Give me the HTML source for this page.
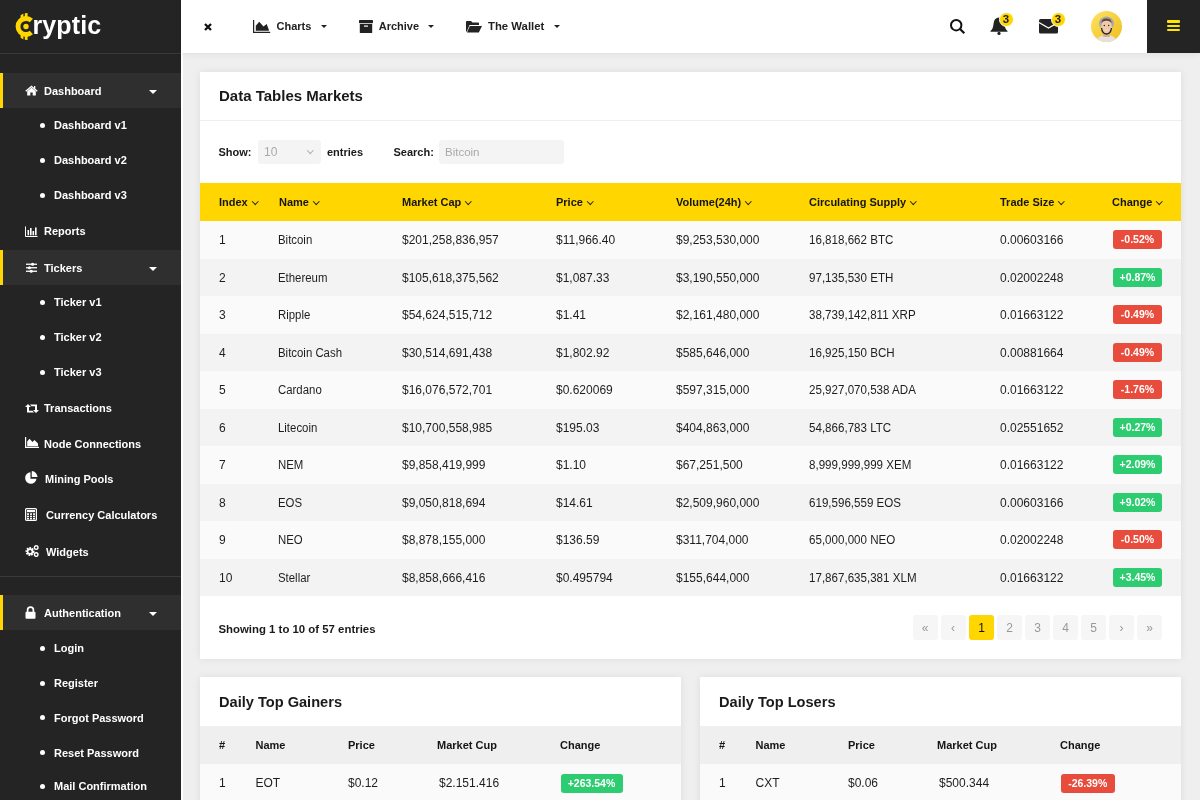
<!DOCTYPE html>
<html><head><meta charset="utf-8"><style>
*{box-sizing:border-box;margin:0;padding:0}
html,body{width:1200px;height:800px;overflow:hidden}
body{will-change:transform}
body{font-family:"Liberation Sans",sans-serif;background:#efefef;position:relative;color:#222}
.abs{position:absolute}
svg{display:block}
#side{position:absolute;left:0;top:0;width:181px;height:800px;background:#242424}
.mi{position:absolute;left:0;width:181px;height:35px;color:#fff;font-weight:bold;font-size:11px;white-space:nowrap}
.mi.act{background:#2f2f2f}
.mi.act::before{content:"";position:absolute;left:0;top:0;width:3px;height:35px;background:#ffd600}
.mi .t{position:absolute;left:44px;top:0;line-height:35px}
.mi .ic{position:absolute;left:25px}
.mi .car{position:absolute;left:149px;top:16.5px;width:0;height:0;border-left:4px solid transparent;border-right:4px solid transparent;border-top:4px solid #fff}
.si{position:absolute;left:0;width:181px;height:20px;color:#fff;font-weight:bold;font-size:11px;white-space:nowrap}
.si .t{position:absolute;left:54px;top:0;line-height:20px}
.si .b{position:absolute;left:40px;top:7.5px;width:5px;height:5px;border-radius:50%;background:#fff}
#top{position:absolute;left:181px;top:0;width:1019px;height:53px;background:#fff;box-shadow:0 1px 7px rgba(0,0,0,.08)}
.tn{position:absolute;top:0;height:53px;line-height:53px;font-weight:bold;font-size:11px;color:#222;white-space:nowrap}
.caret{position:absolute;width:0;height:0;border-left:3.5px solid transparent;border-right:3.5px solid transparent;border-top:3.5px solid #222}
.card{position:absolute;background:#fff;box-shadow:0 0 8px rgba(0,0,0,.08)}
.ttl{position:absolute;font-weight:bold;font-size:15px;color:#1a1a1a;white-space:nowrap}
.lbl{font-weight:bold;font-size:11px;color:#1a1a1a;white-space:nowrap}
.row{position:absolute;left:0;width:981px;height:37.5px}
.cell{position:absolute;top:1px;line-height:37.5px;font-size:12px;color:#1e1e1e;white-space:nowrap}
.hcell{position:absolute;top:0;line-height:38px;font-size:11px;font-weight:bold;color:#151515;white-space:nowrap}
.chev{display:inline-block;width:4.5px;height:4.5px;border-right:1.3px solid #222;border-bottom:1.3px solid #222;transform:rotate(45deg);margin-left:5px;position:relative;top:-2.5px}
.bdg{position:absolute;height:19px;line-height:19px;border-radius:3px;color:#fff;font-size:10.5px;font-weight:bold;text-align:center}
.red{background:#e74c3c}.grn{background:#2ecc71}
.pg{position:absolute;width:25px;height:25px;line-height:25px;text-align:center;background:#f6f6f6;border-radius:3px;color:#999;font-size:12px;padding-top:1px}
.pg.on{background:#ffd600;color:#111}

</style></head><body>
<div id="side">
<div class="logo abs" style="left:14px;top:12px"><svg width="21" height="29" viewBox="0 0 21 29"><g fill="#ffd700"><path d="M17.35 8.55 A8.0 8.0 0 1 0 17.35 20.45" stroke="#ffd700" stroke-width="4.8" fill="none"/><circle cx="12" cy="14.5" r="2.7"/><path d="M6.6 3.2 L9.4 1.6 L9.4 5.6 L6.6 6.6 Z"/><path d="M10.8 1.2 L13.6 0.9 L13.6 5.6 L10.8 5.5 Z"/><path d="M6.6 22.4 L9.4 23.4 L9.4 27.4 L6.6 25.8 Z"/><path d="M10.8 23.5 L13.6 23.4 L13.6 28.1 L10.8 27.8 Z"/></g></svg></div>
<div class="abs" style="left:32.5px;top:9.5px;font-size:25px;font-weight:bold;color:#fff;line-height:30px;letter-spacing:0.1px">ryptic</div>
<div class="abs" style="left:181px;top:53px;width:2px;height:747px;background:#fff"></div>
<div class="abs" style="left:0;top:53px;width:181px;height:1px;background:#3a3a3a"></div>
<div class="mi act" style="top:73.0px"><div class="ic" style="left:25px;top:12px"><svg width="13" height="11" viewBox="0 0 13 11"><path d="M6.5 0.6 L0.3 5.8 L1.1 6.7 L6.5 2.2 L11.9 6.7 L12.7 5.8 L10.3 3.8 L10.3 1 L9 1 L9 2.7 Z M2.2 6.2 L2.2 10.6 L5.3 10.6 L5.3 7.6 L7.7 7.6 L7.7 10.6 L10.8 10.6 L10.8 6.2 L6.5 2.7 Z" fill="#fff"/></svg></div><div class="t" style="left:44px;top:0.5px">Dashboard</div><div class="car"></div></div>
<div class="si" style="top:115px"><div class="b"></div><div class="t">Dashboard v1</div></div>
<div class="si" style="top:150px"><div class="b"></div><div class="t">Dashboard v2</div></div>
<div class="si" style="top:185px"><div class="b"></div><div class="t">Dashboard v3</div></div>
<div class="mi" style="top:213.5px"><div class="ic" style="left:25px;top:12px"><svg width="13" height="11" viewBox="0 0 13 11"><path d="M0.5 0.5 V10.5 H12.5" stroke="#fff" stroke-width="1" fill="none"/><rect x="2.5" y="4" width="1.6" height="5.3" fill="#fff"/><rect x="5" y="2" width="1.6" height="7.3" fill="#fff"/><rect x="7.5" y="5" width="1.6" height="4.3" fill="#fff"/><rect x="10" y="1.5" width="1.6" height="7.8" fill="#fff"/></svg></div><div class="t" style="left:44px;top:0.5px">Reports</div></div>
<div class="mi act" style="top:250.0px"><div class="ic" style="left:25.5px;top:12px"><svg width="11.5" height="11" viewBox="0 0 11.5 11"><g fill="#fff"><rect x="0" y="1.6" width="11.5" height="1.3"/><rect x="0" y="5.1" width="11.5" height="1.3"/><rect x="0" y="8.6" width="11.5" height="1.3"/><ellipse cx="6.6" cy="2.25" rx="1.6" ry="1.6"/><ellipse cx="3.4" cy="5.75" rx="1.6" ry="1.6"/><ellipse cx="5.2" cy="9.25" rx="1.6" ry="1.6"/></g></svg></div><div class="t" style="left:44px;top:1px">Tickers</div><div class="car"></div></div>
<div class="si" style="top:292px"><div class="b"></div><div class="t">Ticker v1</div></div>
<div class="si" style="top:327px"><div class="b"></div><div class="t">Ticker v2</div></div>
<div class="si" style="top:362px"><div class="b"></div><div class="t">Ticker v3</div></div>
<div class="mi" style="top:390.5px"><div class="ic" style="left:25px;top:12px"><svg width="14" height="11" viewBox="0 0 14 11"><path d="M3 1 L0 4 H2 V9.5 H9 L7.5 7.8 H4 V4 H6 Z" fill="#fff"/><path d="M11 10 L14 7 H12 V1.5 H5 L6.5 3.2 H10 V7 H8 Z" fill="#fff"/></svg></div><div class="t" style="left:44px;top:0.5px">Transactions</div></div>
<div class="mi" style="top:426.0px"><div class="ic" style="left:25px;top:11px"><svg width="14" height="11" viewBox="0 0 14 11"><path d="M0.6 0 V10.4 H14" stroke="#fff" stroke-width="1.2" fill="none"/><path d="M2.2 9.2 V4.5 L4.5 1.8 L7.5 5 L9.5 3 L13 6.5 V9.2 Z" fill="#fff"/></svg></div><div class="t" style="left:44px;top:0.5px">Node Connections</div></div>
<div class="mi" style="top:461.0px"><div class="ic" style="left:24px;top:10px"><svg width="14" height="14" viewBox="0 0 13 13"><path d="M6 1.2 A5.3 5.3 0 1 0 11.6 7.2 H6 Z" fill="#fff"/><path d="M7.2 0 A5.8 5.8 0 0 1 12.6 5.6 H7.2 Z" fill="#fff"/></svg></div><div class="t" style="left:45px;top:0.5px">Mining Pools</div></div>
<div class="mi" style="top:497.5px"><div class="ic" style="left:25px;top:10.5px"><svg width="12" height="13" viewBox="0 0 12 13"><rect x="0.6" y="0.6" width="10.8" height="11.8" rx="1" fill="none" stroke="#fff" stroke-width="1.2"/><rect x="2" y="2" width="8" height="2.2" fill="#fff"/><g fill="#fff"><rect x="2" y="5.3" width="2" height="1.6"/><rect x="5" y="5.3" width="2" height="1.6"/><rect x="8" y="5.3" width="2" height="1.6"/><rect x="2" y="7.7" width="2" height="1.6"/><rect x="5" y="7.7" width="2" height="1.6"/><rect x="8" y="7.7" width="2" height="1.6"/><rect x="2" y="10" width="2" height="1.4"/><rect x="5" y="10" width="2" height="1.4"/><rect x="8" y="10" width="2" height="1.4"/></g></svg></div><div class="t" style="left:46px;top:0.5px">Currency Calculators</div></div>
<div class="mi" style="top:534.5px"><div class="ic" style="left:25px;top:10.5px"><svg width="14" height="12" viewBox="0 0 14 12"><circle cx="5" cy="6.5" r="3.4" fill="none" stroke="#fff" stroke-width="2.2" stroke-dasharray="1.6 0.9"/><circle cx="5" cy="6.5" r="2.4" fill="none" stroke="#fff" stroke-width="1.6"/><circle cx="11.2" cy="2.6" r="1.8" fill="none" stroke="#fff" stroke-width="1.4"/><circle cx="11.2" cy="9.6" r="1.8" fill="none" stroke="#fff" stroke-width="1.4"/></svg></div><div class="t" style="left:46px;top:0.5px">Widgets</div></div>
<div class="abs" style="left:0;top:576px;width:181px;height:1px;background:#3a3a3a"></div>
<div class="mi act" style="top:595.0px"><div class="ic" style="left:25px;top:10.5px"><svg width="11" height="13" viewBox="0 0 11 13"><path d="M2.6 6 V4 A2.9 2.9 0 0 1 8.4 4 V6" stroke="#fff" stroke-width="1.7" fill="none"/><rect x="0.5" y="5.8" width="10" height="7" rx="1" fill="#fff"/></svg></div><div class="t" style="left:44px;top:0.5px">Authentication</div><div class="car"></div></div>
<div class="si" style="top:638px"><div class="b"></div><div class="t">Login</div></div>
<div class="si" style="top:673px"><div class="b"></div><div class="t">Register</div></div>
<div class="si" style="top:707.5px"><div class="b"></div><div class="t">Forgot Password</div></div>
<div class="si" style="top:742.5px"><div class="b"></div><div class="t">Reset Password</div></div>
<div class="si" style="top:776px"><div class="b"></div><div class="t">Mail Confirmation</div></div>
</div>
<div id="top">
</div>
<div class="abs" style="left:203.5px;top:22.8px"><svg width="8" height="8" viewBox="0 0 8 8"><path d="M1 1 L7 7 M7 1 L1 7" stroke="#111" stroke-width="2.3"/></svg></div>
<div class="abs" style="left:253px;top:20px"><svg width="18" height="13" viewBox="0 0 18 13"><path d="M0.6 0 V12.4 H17.2" stroke="#222" stroke-width="1.2" fill="none"/><path d="M2.8 10.8 V5.8 L6.2 1.7 L10.5 6.5 L13.7 4 L15.9 9.9 V10.8 Z" fill="#222"/></svg></div>
<div class="tn" style="left:276.5px">Charts</div><div class="caret" style="left:321px;top:24.5px"></div>
<div class="abs" style="left:358.5px;top:20px"><svg width="14" height="13" viewBox="0 0 14 13"><rect x="0" y="0" width="14" height="3.2" rx=".6" fill="#222"/><rect x="0.8" y="4" width="12.4" height="9" rx=".6" fill="#222"/><rect x="5" y="5.5" width="4" height="1.2" fill="#fff"/></svg></div>
<div class="tn" style="left:378.7px">Archive</div><div class="caret" style="left:428px;top:24.5px"></div>
<div class="abs" style="left:465.5px;top:21px"><svg width="16" height="12" viewBox="0 0 16 12"><path d="M0 1 Q0 0 1 0 H5 L6.5 1.5 H12 Q13 1.5 13 2.5 V4 H3.5 L0.8 10.5 H0 Z" fill="#222"/><path d="M3.8 5 H16 L12.8 11.5 H1 Z" fill="#222"/></svg></div>
<div class="tn" style="left:488px;font-size:11.35px">The Wallet</div><div class="caret" style="left:554px;top:24.5px"></div>
<div class="abs" style="left:950px;top:19px"><svg width="16" height="15" viewBox="0 0 16 15"><circle cx="6.2" cy="6.2" r="5.2" stroke="#111" stroke-width="2" fill="none"/><path d="M10 10 L14.3 14.2" stroke="#111" stroke-width="2.2"/></svg></div>
<div class="abs" style="left:989.5px;top:16px"><svg width="18" height="20" viewBox="0 0 18 20"><path d="M9 1.5 Q4 1.5 3.5 8 Q3.2 13 0.5 15 V15.8 H17.5 V15 Q14.8 13 14.5 8 Q14 1.5 9 1.5 Z" fill="#222"/><circle cx="9" cy="17.4" r="1.6" fill="#222"/></svg></div>
<div class="abs" style="left:998.5px;top:11.5px;width:15px;height:15px;border-radius:50%;background:#ffd600;border:1px solid #fff;font-size:11.5px;font-weight:bold;line-height:13.5px;text-align:center;color:#1c1c2a">3</div>
<div class="abs" style="left:1038.5px;top:19px"><svg width="19" height="15" viewBox="0 0 19 15"><rect x="0" y="0" width="19" height="14.6" rx="1.5" fill="#222"/><path d="M0 3.5 L9.5 9 L19 3.5" stroke="#fff" stroke-width="1.3" fill="none"/></svg></div>
<div class="abs" style="left:1050.5px;top:11.5px;width:15px;height:15px;border-radius:50%;background:#ffd600;border:1px solid #fff;font-size:11.5px;font-weight:bold;line-height:13.5px;text-align:center;color:#1c1c2a">3</div>
<div class="abs" style="left:1091px;top:11px"><svg width="31" height="31" viewBox="0 0 31 31"><defs><clipPath id="av"><circle cx="15.5" cy="15.5" r="15.5"/></clipPath><linearGradient id="avg" x1="0" y1="0" x2="1" y2="1"><stop offset="0" stop-color="#fde462"/><stop offset="1" stop-color="#efbd1d"/></linearGradient></defs><g clip-path="url(#av)"><rect width="31" height="31" fill="url(#avg)"/><ellipse cx="15.5" cy="31" rx="10.5" ry="7" fill="#e4e2da"/><rect x="12.3" y="21" width="6.4" height="5" fill="#d8ae8a"/><ellipse cx="15.5" cy="12.5" rx="7.4" ry="7" fill="#a3a6ad"/><ellipse cx="15.5" cy="16" rx="5.5" ry="7" fill="#eec9ab"/><path d="M10.3 12 Q10.8 7.5 15.5 7.6 Q20.2 7.5 20.7 12 Q18.5 9.6 15.5 9.8 Q12.5 9.6 10.3 12 Z" fill="#6a4630"/><path d="M10.6 17 Q11 22.6 15.5 23 Q20 22.6 20.4 17" stroke="#2b211c" stroke-width="1.3" fill="none"/><circle cx="13.3" cy="14.6" r=".75" fill="#3a2a20"/><circle cx="17.7" cy="14.6" r=".75" fill="#3a2a20"/><path d="M13.6 18.8 Q15.5 20.6 17.4 18.8 Z" fill="#f4e6dc"/></g></svg></div>
<div class="abs" style="left:1147px;top:0;width:53px;height:53px;background:#242424"></div>
<div class="abs" style="left:1166.5px;top:20.3px;width:13.5px;height:2.6px;background:#ffe600;border-radius:1px"></div>
<div class="abs" style="left:1166.5px;top:24.5px;width:13.5px;height:2.6px;background:#ffe600;border-radius:1px"></div>
<div class="abs" style="left:1166.5px;top:28.8px;width:13.5px;height:2.6px;background:#ffe600;border-radius:1px"></div>
<div class="card" style="left:200px;top:71.5px;width:981px;height:587px">
<div class="ttl" style="left:19px;top:15.5px;line-height:18px">Data Tables Markets</div>
<div class="abs" style="left:0;top:48.5px;width:981px;height:1px;background:#eee"></div>
<div class="lbl abs" style="left:18.5px;top:68.5px;line-height:24px">Show:</div>
<div class="abs" style="left:58px;top:68.5px;width:63px;height:24px;background:#f4f4f4;border-radius:3px;font-size:12px;color:#aaa;line-height:24px;padding-left:6px">10<span class="abs" style="left:50px;top:8px;width:4.5px;height:4.5px;border-right:1.1px solid #aaa;border-bottom:1.1px solid #aaa;transform:rotate(45deg)"></span></div>
<div class="lbl abs" style="left:127px;top:68.5px;line-height:24px">entries</div>
<div class="lbl abs" style="left:193.5px;top:68.5px;line-height:24px">Search:</div>
<div class="abs" style="left:239px;top:68.5px;width:125px;height:24px;background:#f4f4f4;border-radius:3px;font-size:11.5px;color:#aaa;line-height:24px;padding-left:6px">Bitcoin</div>
<div class="abs" style="left:0;top:111.5px;width:981px;height:38px;background:#ffd600"></div>
<div class="hcell" style="left:19px;top:111.5px">Index<i class="chev"></i></div>
<div class="hcell" style="left:79px;top:111.5px">Name<i class="chev"></i></div>
<div class="hcell" style="left:202px;top:111.5px">Market Cap<i class="chev"></i></div>
<div class="hcell" style="left:356px;top:111.5px">Price<i class="chev"></i></div>
<div class="hcell" style="left:476px;top:111.5px">Volume(24h)<i class="chev"></i></div>
<div class="hcell" style="left:609px;top:111.5px">Circulating Supply<i class="chev"></i></div>
<div class="hcell" style="left:800px;top:111.5px">Trade Size<i class="chev"></i></div>
<div class="hcell" style="left:912px;top:111.5px">Change<i class="chev"></i></div>
<div class="row" style="top:149.5px;background:#fafafa">
<div class="cell" style="left:19px">1</div>
<div class="cell" style="left:78.4px;transform:scaleX(0.95);transform-origin:0 0">Bitcoin</div>
<div class="cell" style="left:202px">$201,258,836,957</div>
<div class="cell" style="left:356px">$11,966.40</div>
<div class="cell" style="left:476px">$9,253,530,000</div>
<div class="cell" style="left:608.5px;transform:scaleX(0.965);transform-origin:0 0">16,818,662 BTC</div>
<div class="cell" style="left:800px">0.00603166</div>
<div class="bdg red" style="left:913px;top:9px;width:49px">-0.52%</div>
</div>
<div class="row" style="top:187.0px;background:#f3f3f3">
<div class="cell" style="left:19px">2</div>
<div class="cell" style="left:78.4px;transform:scaleX(0.95);transform-origin:0 0">Ethereum</div>
<div class="cell" style="left:202px">$105,618,375,562</div>
<div class="cell" style="left:356px">$1,087.33</div>
<div class="cell" style="left:476px">$3,190,550,000</div>
<div class="cell" style="left:608.5px;transform:scaleX(0.965);transform-origin:0 0">97,135,530 ETH</div>
<div class="cell" style="left:800px">0.02002248</div>
<div class="bdg grn" style="left:913px;top:9px;width:49px">+0.87%</div>
</div>
<div class="row" style="top:224.5px;background:#fafafa">
<div class="cell" style="left:19px">3</div>
<div class="cell" style="left:78.4px;transform:scaleX(0.95);transform-origin:0 0">Ripple</div>
<div class="cell" style="left:202px">$54,624,515,712</div>
<div class="cell" style="left:356px">$1.41</div>
<div class="cell" style="left:476px">$2,161,480,000</div>
<div class="cell" style="left:608.5px;transform:scaleX(0.965);transform-origin:0 0">38,739,142,811 XRP</div>
<div class="cell" style="left:800px">0.01663122</div>
<div class="bdg red" style="left:913px;top:9px;width:49px">-0.49%</div>
</div>
<div class="row" style="top:262.0px;background:#f3f3f3">
<div class="cell" style="left:19px">4</div>
<div class="cell" style="left:78.4px;transform:scaleX(0.95);transform-origin:0 0">Bitcoin Cash</div>
<div class="cell" style="left:202px">$30,514,691,438</div>
<div class="cell" style="left:356px">$1,802.92</div>
<div class="cell" style="left:476px">$585,646,000</div>
<div class="cell" style="left:608.5px;transform:scaleX(0.965);transform-origin:0 0">16,925,150 BCH</div>
<div class="cell" style="left:800px">0.00881664</div>
<div class="bdg red" style="left:913px;top:9px;width:49px">-0.49%</div>
</div>
<div class="row" style="top:299.5px;background:#fafafa">
<div class="cell" style="left:19px">5</div>
<div class="cell" style="left:78.4px;transform:scaleX(0.95);transform-origin:0 0">Cardano</div>
<div class="cell" style="left:202px">$16,076,572,701</div>
<div class="cell" style="left:356px">$0.620069</div>
<div class="cell" style="left:476px">$597,315,000</div>
<div class="cell" style="left:608.5px;transform:scaleX(0.965);transform-origin:0 0">25,927,070,538 ADA</div>
<div class="cell" style="left:800px">0.01663122</div>
<div class="bdg red" style="left:913px;top:9px;width:49px">-1.76%</div>
</div>
<div class="row" style="top:337.0px;background:#f3f3f3">
<div class="cell" style="left:19px">6</div>
<div class="cell" style="left:78.4px;transform:scaleX(0.95);transform-origin:0 0">Litecoin</div>
<div class="cell" style="left:202px">$10,700,558,985</div>
<div class="cell" style="left:356px">$195.03</div>
<div class="cell" style="left:476px">$404,863,000</div>
<div class="cell" style="left:608.5px;transform:scaleX(0.965);transform-origin:0 0">54,866,783 LTC</div>
<div class="cell" style="left:800px">0.02551652</div>
<div class="bdg grn" style="left:913px;top:9px;width:49px">+0.27%</div>
</div>
<div class="row" style="top:374.5px;background:#fafafa">
<div class="cell" style="left:19px">7</div>
<div class="cell" style="left:78.4px;transform:scaleX(0.95);transform-origin:0 0">NEM</div>
<div class="cell" style="left:202px">$9,858,419,999</div>
<div class="cell" style="left:356px">$1.10</div>
<div class="cell" style="left:476px">$67,251,500</div>
<div class="cell" style="left:608.5px;transform:scaleX(0.965);transform-origin:0 0">8,999,999,999 XEM</div>
<div class="cell" style="left:800px">0.01663122</div>
<div class="bdg grn" style="left:913px;top:9px;width:49px">+2.09%</div>
</div>
<div class="row" style="top:412.0px;background:#f3f3f3">
<div class="cell" style="left:19px">8</div>
<div class="cell" style="left:78.4px;transform:scaleX(0.95);transform-origin:0 0">EOS</div>
<div class="cell" style="left:202px">$9,050,818,694</div>
<div class="cell" style="left:356px">$14.61</div>
<div class="cell" style="left:476px">$2,509,960,000</div>
<div class="cell" style="left:608.5px;transform:scaleX(0.965);transform-origin:0 0">619,596,559 EOS</div>
<div class="cell" style="left:800px">0.00603166</div>
<div class="bdg grn" style="left:913px;top:9px;width:49px">+9.02%</div>
</div>
<div class="row" style="top:449.5px;background:#fafafa">
<div class="cell" style="left:19px">9</div>
<div class="cell" style="left:78.4px;transform:scaleX(0.95);transform-origin:0 0">NEO</div>
<div class="cell" style="left:202px">$8,878,155,000</div>
<div class="cell" style="left:356px">$136.59</div>
<div class="cell" style="left:476px">$311,704,000</div>
<div class="cell" style="left:608.5px;transform:scaleX(0.965);transform-origin:0 0">65,000,000 NEO</div>
<div class="cell" style="left:800px">0.02002248</div>
<div class="bdg red" style="left:913px;top:9px;width:49px">-0.50%</div>
</div>
<div class="row" style="top:487.0px;background:#f3f3f3">
<div class="cell" style="left:19px">10</div>
<div class="cell" style="left:78.4px;transform:scaleX(0.95);transform-origin:0 0">Stellar</div>
<div class="cell" style="left:202px">$8,858,666,416</div>
<div class="cell" style="left:356px">$0.495794</div>
<div class="cell" style="left:476px">$155,644,000</div>
<div class="cell" style="left:608.5px;transform:scaleX(0.965);transform-origin:0 0">17,867,635,381 XLM</div>
<div class="cell" style="left:800px">0.01663122</div>
<div class="bdg grn" style="left:913px;top:9px;width:49px">+3.45%</div>
</div>
<div class="lbl abs" style="left:18.5px;top:545px;line-height:24px;font-size:11.4px">Showing 1 to 10 of 57 entries</div>
<div class="pg" style="left:712.5px;top:543px">&laquo;</div>
<div class="pg" style="left:740.5px;top:543px">&lsaquo;</div>
<div class="pg on" style="left:769px;top:543px">1</div>
<div class="pg" style="left:797px;top:543px">2</div>
<div class="pg" style="left:825px;top:543px">3</div>
<div class="pg" style="left:853px;top:543px">4</div>
<div class="pg" style="left:881px;top:543px">5</div>
<div class="pg" style="left:909px;top:543px">&rsaquo;</div>
<div class="pg" style="left:937px;top:543px">&raquo;</div>
</div>
<div class="card" style="left:200px;top:677px;width:481px;height:140px">
<div class="ttl" style="left:19px;top:15.5px;line-height:18px;font-size:14.6px">Daily Top Gainers</div>
<div class="abs" style="left:0;top:49px;width:481px;height:37.5px;background:#efefef"></div>
<div class="hcell" style="left:19px;top:50px;line-height:37.5px">#</div>
<div class="hcell" style="left:55.5px;top:50px;line-height:37.5px">Name</div>
<div class="hcell" style="left:148px;top:50px;line-height:37.5px">Price</div>
<div class="hcell" style="left:237px;top:50px;line-height:37.5px">Market Cup</div>
<div class="hcell" style="left:360px;top:50px;line-height:37.5px">Change</div>
<div class="abs" style="left:0;top:86.5px;width:481px;height:37.5px;background:#fafafa"></div>
<div class="cell" style="left:19px;top:88px">1</div>
<div class="cell" style="left:55.5px;top:88px">EOT</div>
<div class="cell" style="left:148px;top:88px">$0.12</div>
<div class="cell" style="left:239px;top:88px">$2.151.416</div>
<div class="bdg grn" style="left:360.5px;top:96.5px;width:62px">+263.54%</div>
</div>
<div class="card" style="left:700px;top:677px;width:481px;height:140px">
<div class="ttl" style="left:19px;top:15.5px;line-height:18px;font-size:14.6px">Daily Top Losers</div>
<div class="abs" style="left:0;top:49px;width:481px;height:37.5px;background:#efefef"></div>
<div class="hcell" style="left:19px;top:50px;line-height:37.5px">#</div>
<div class="hcell" style="left:55.5px;top:50px;line-height:37.5px">Name</div>
<div class="hcell" style="left:148px;top:50px;line-height:37.5px">Price</div>
<div class="hcell" style="left:237px;top:50px;line-height:37.5px">Market Cup</div>
<div class="hcell" style="left:360px;top:50px;line-height:37.5px">Change</div>
<div class="abs" style="left:0;top:86.5px;width:481px;height:37.5px;background:#fafafa"></div>
<div class="cell" style="left:19px;top:88px">1</div>
<div class="cell" style="left:55.5px;top:88px">CXT</div>
<div class="cell" style="left:148px;top:88px">$0.06</div>
<div class="cell" style="left:239px;top:88px">$500.344</div>
<div class="bdg red" style="left:360.5px;top:96.5px;width:54.5px">-26.39%</div>
</div>
</body></html>
